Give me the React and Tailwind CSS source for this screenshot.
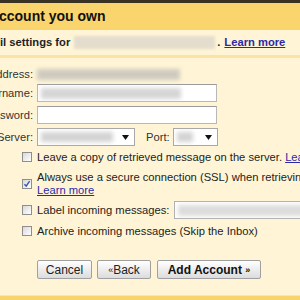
export default function App() {
  const blurGrey = "bg-[#cfcac0] blur-[2px]";
  const Box = ({ checked }) => (
    <div className="w-[10px] h-[10px] shrink-0 border border-[#8e8e8e] bg-gradient-to-br from-[#d8d8d8] to-white flex items-center justify-center">
      {checked && (
        <svg width="8" height="8" viewBox="0 0 8 8">
          <path d="M1.5 4.2 L3.2 6.2 L6.6 1.2" fill="none" stroke="#3b52b0" strokeWidth="1.4" />
        </svg>
      )}
    </div>
  );
  const Arrow = () => (
    <svg width="7" height="5" viewBox="0 0 7 5" className="shrink-0">
      <path d="M0 0 H7 L3.5 5 Z" fill="#111" />
    </svg>
  );
  return (
    <div className="w-[300px] h-[300px] overflow-hidden bg-[#fff5d6] text-[#222] font-['Liberation_Sans',Arial,sans-serif] flex flex-col whitespace-nowrap">
      <div className="h-[3px] bg-[#3a3222] shrink-0" />
      <div className="h-[27px] bg-[#fad46c] flex items-center shrink-0 pb-[1px]">
        <span className="text-[14px] font-bold -ml-[1px] text-[#111]">ccount you own</span>
      </div>
      <div className="h-[25px] flex items-center shrink-0 text-[11.2px] font-bold">
        <span>il settings for</span>
        <div className="w-[141px] h-[13px] ml-[4px] bg-[#e4ddcd] blur-[1.5px]" />
        <span className="ml-[2px]">.</span>
        <span className="ml-[4px] text-[#2a2aa6] underline">Learn more</span>
      </div>
      <div className="h-[3px] bg-[#fbe3a2] shrink-0" />

      <div className="flex flex-col pt-[8px] text-[11.2px]">
        <div className="flex items-center h-[16px]">
          <div className="w-[33px] flex justify-end overflow-hidden text-[#333]"><span className="shrink-0">Email address:</span></div>
          <div className={`ml-[4px] w-[143px] h-[11px] ${blurGrey}`} />
        </div>
        <div className="flex items-center h-[18px] mt-[2px]">
          <div className="w-[33px] flex justify-end overflow-hidden text-[#333]"><span className="shrink-0">Username:</span></div>
          <div className="ml-[4px] w-[180px] h-[18px] bg-white border border-[#b8b8b8] border-t-[#9a9a9a] flex items-center pl-[3px]">
            <div className="w-[140px] h-[11px] bg-[#d6d6d6] blur-[2px]" />
          </div>
        </div>
        <div className="flex items-center h-[18px] mt-[4px]">
          <div className="w-[33px] flex justify-end overflow-hidden text-[#333]"><span className="shrink-0">Password:</span></div>
          <div className="ml-[4px] w-[180px] h-[18px] bg-white border border-[#b8b8b8] border-t-[#9a9a9a]" />
        </div>
        <div className="flex items-center h-[18px] mt-[4px]">
          <div className="w-[33px] flex justify-end overflow-hidden text-[#333]"><span className="shrink-0">POP Server:</span></div>
          <div className="ml-[4px] w-[98px] h-[18px] bg-white border border-[#a8a8a8] flex items-center pl-[3px] pr-[5px] justify-between">
            <div className="w-[72px] h-[10px] bg-[#d4d4d4] blur-[2px]" />
            <Arrow />
          </div>
          <span className="ml-[11px] text-[#333]">Port:</span>
          <div className="ml-[3px] w-[45px] h-[18px] bg-white border border-[#a8a8a8] flex items-center pl-[3px] pr-[5px] justify-between">
            <div className="w-[16px] h-[10px] bg-[#d4d4d4] blur-[2px]" />
            <Arrow />
          </div>
        </div>

        <div className="flex items-center h-[14px] mt-[4px] pl-[22px]">
          <Box />
          <span className="ml-[5px]">Leave a copy of retrieved message on the server. <span className="text-[#2a2aa6] underline">Learn more</span></span>
        </div>
        <div className="flex items-center mt-[7px] pl-[22px]">
          <Box checked />
          <div className="ml-[5px] flex flex-col leading-[13px]">
            <span>Always use a secure connection (SSL) when retrieving mail.</span>
            <span className="text-[#2a2aa6] underline">Learn more</span>
          </div>
        </div>
        <div className="flex items-center h-[18px] mt-[4px] pl-[22px]">
          <Box />
          <span className="ml-[5px]">Label incoming messages:</span>
          <div className="ml-[5px] w-[140px] h-[18px] bg-white border border-[#b0b0b0] flex items-center pl-[3px] shrink-0">
            <div className="w-[130px] h-[11px] bg-[#dcdcdc] blur-[2px]" />
          </div>
        </div>
        <div className="flex items-center h-[14px] mt-[5px] pl-[22px]">
          <Box />
          <span className="ml-[5px]">Archive incoming messages (Skip the Inbox)</span>
        </div>

        <div className="flex items-center mt-[22px] pl-[37px] text-[12px]">
          <button className="w-[55px] h-[19px] border border-[#a0a0a0] rounded-[2px] bg-gradient-to-b from-white to-[#dcdcdc] text-[#222]">Cancel</button>
          <button className="ml-[5px] w-[54px] h-[19px] border border-[#a0a0a0] rounded-[2px] bg-gradient-to-b from-white to-[#dcdcdc] text-[#222]"><span className="text-[9px] align-[1px]">«</span>Back</button>
          <button className="ml-[6px] w-[104px] h-[19px] border border-[#a0a0a0] rounded-[2px] bg-gradient-to-b from-white to-[#dcdcdc] text-[#111] font-bold">Add Account <span className="text-[9px] align-[1px]">»</span></button>
        </div>
      </div>
      <div className="mt-auto h-[1px] bg-[#fbe6a8] shrink-0" />
      <div className="h-[4px] bg-[#f9d46c] shrink-0" />
    </div>
  );
}
